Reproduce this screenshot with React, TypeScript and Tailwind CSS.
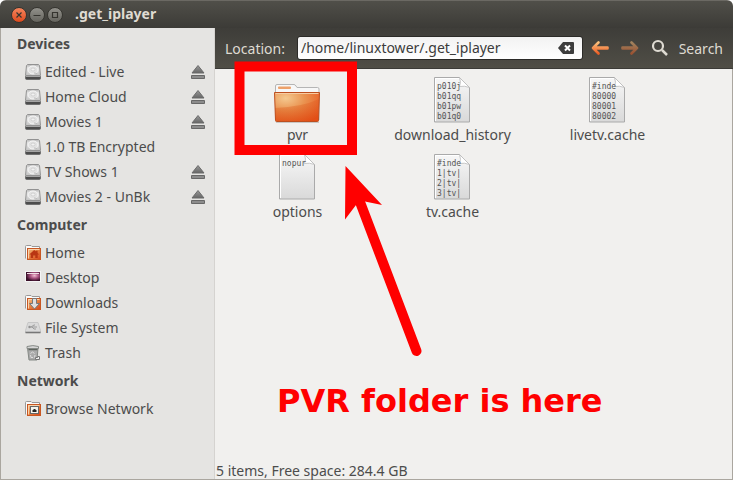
import React, { useState } from "react";

type PlaceKind = "drive" | "home" | "desktop" | "downloads" | "system" | "trash" | "network";

interface Place {
  name: string;
  kind: PlaceKind;
  eject?: boolean;
}

const sections: { title: string; places: Place[] }[] = [
  {
    title: "Devices",
    places: [
      { name: "Edited - Live", kind: "drive", eject: true },
      { name: "Home Cloud", kind: "drive", eject: true },
      { name: "Movies 1", kind: "drive", eject: true },
      { name: "1.0 TB Encrypted", kind: "drive" },
      { name: "TV Shows 1", kind: "drive", eject: true },
      { name: "Movies 2 - UnBk", kind: "drive", eject: true },
    ],
  },
  {
    title: "Computer",
    places: [
      { name: "Home", kind: "home" },
      { name: "Desktop", kind: "desktop" },
      { name: "Downloads", kind: "downloads" },
      { name: "File System", kind: "system" },
      { name: "Trash", kind: "trash" },
    ],
  },
  { title: "Network", places: [{ name: "Browse Network", kind: "network" }] },
];

const files: { name: string; lines?: string[] }[] = [
  { name: "pvr" },
  { name: "download_history", lines: ["p010j", "b01qq", "b01pw", "b01q0"] },
  { name: "livetv.cache", lines: ["#inde", "80000", "80001", "80002"] },
  { name: "options", lines: ["nopur"] },
  { name: "tv.cache", lines: ["#inde", "1|tv|", "2|tv|", "3|tv|"] },
];

function Gradients() {
  return (
    <svg width="0" height="0" className="absolute" aria-hidden="true">
      <defs>
        <linearGradient id="metal" x1="0" y1="0" x2="0" y2="1">
          <stop offset="0" stopColor="#b4b4b4" />
          <stop offset="0.3" stopColor="#e4e4e4" />
          <stop offset="1" stopColor="#c4c4c4" />
        </linearGradient>
        <linearGradient id="orange" x1="0" y1="0" x2="1" y2="1">
          <stop offset="0" stopColor="#f3c48c" />
          <stop offset="0.5" stopColor="#e5803f" />
          <stop offset="1" stopColor="#d8431a" />
        </linearGradient>
        <radialGradient id="folder" cx="0.25" cy="0.2" r="0.95">
          <stop offset="0" stopColor="#f4c88f" />
          <stop offset="0.45" stopColor="#ea9350" />
          <stop offset="1" stopColor="#e8531d" />
        </radialGradient>
        <linearGradient id="shade" x1="0" y1="0" x2="0" y2="1">
          <stop offset="0" stopColor="#d8480c" stopOpacity="0.2" />
          <stop offset="1" stopColor="#d8480c" stopOpacity="0.4" />
        </linearGradient>
        <radialGradient id="wall" cx="0.6" cy="0.4" r="0.6">
          <stop offset="0" stopColor="#f3bfd2" />
          <stop offset="0.5" stopColor="#a85280" />
          <stop offset="1" stopColor="#3a1029" />
        </radialGradient>
        <linearGradient id="paper" x1="0" y1="0" x2="0" y2="1">
          <stop offset="0" stopColor="#f7f7f7" />
          <stop offset="1" stopColor="#d9d9d9" />
        </linearGradient>
        <linearGradient id="eject" x1="0" y1="0" x2="0" y2="1">
          <stop offset="0" stopColor="#999" />
          <stop offset="1" stopColor="#666" />
        </linearGradient>
        <linearGradient id="back" x1="0" y1="0" x2="0" y2="1">
          <stop offset="0" stopColor="#fbc07c" />
          <stop offset="1" stopColor="#ec5e25" />
        </linearGradient>
      </defs>
    </svg>
  );
}

function SmallFolder({ children }: { children: React.ReactNode }) {
  return (
    <>
      <path d="M.5 13.5V1.5Q.5.5 1.5.5H6l1 1h7.5v3" fill="#fafafa" stroke="#999" />
      <rect x="2.5" y="3.5" width="13" height="11" fill="url(#orange)" stroke="#c85722" />
      <path d="M3.5 13.5v-9h11" fill="none" stroke="#f8d2ab" />
      {children}
    </>
  );
}

function PlaceIcon({ kind }: { kind: PlaceKind }) {
  return (
    <svg width="16" height="16" viewBox="0 0 16 16" aria-hidden="true" className="shrink-0">
      {kind === "drive" && (
        <>
          <path d="M2.5.5h11l1 1 1 10H.5l1-10z" fill="url(#metal)" stroke="#929292" />
          <ellipse cx="8" cy="6" rx="5" ry="4" fill="#e2e2e2" stroke="#f6f6f6" />
          <ellipse cx="8" cy="5.5" rx="2" ry="1.5" fill="#f2f2f2" stroke="#c6c6c6" strokeWidth=".7" />
          <path d="m9 9 3 .5" stroke="#bbb" />
          <path d="M.5 12.5h15v1.700q0 1.300-1.300 1.300H1.800q-1.300 0-1.300-1.300z" fill="#4c4c4c" stroke="#707070" />
          <path d="M1 12.500h14" stroke="#a5a5a5" />
        </>
      )}
      {kind === "home" && (
        <SmallFolder>
          <path d="M9.2 5 4.3 9.5h1.4V13h2.4v-2.5h2.2V13h2.4V9.5h1.5l-1.6-1.6V5.7h-1.5v.8z" fill="#b93613" />
        </SmallFolder>
      )}
      {kind === "desktop" && (
        <>
          <rect x=".5" y="1.500" width="15" height="10" fill="#fff" stroke="#f4f4f4" />
          <rect x="1" y="2" width="14" height="9" fill="url(#wall)" />
          <path d="M2 3.500h12" stroke="#f1dce5" />
        </>
      )}
      {kind === "downloads" && (
        <SmallFolder>
          <path d="M7.500 3.500h4v5H14.500L9.500 14 4.500 8.500h3z" fill="#dedede" stroke="#777" />
        </SmallFolder>
      )}
      {kind === "system" && (
        <>
          <path d="M3 2.5h10l2.5 8v2H.5v-2z" fill="#dadada" stroke="#c6c6c6" />
          <path d="M.5 12.5h15" stroke="#777" strokeWidth="1.6" />
          <path d="M4 7h8M6 7l3-2h1M7 7l2 2h2" fill="none" stroke="#9c9c9c" />
          <circle cx="4.5" cy="7" r="1.2" fill="#929292" />
        </>
      )}
      {kind === "trash" && (
        <>
          <path d="M2.5 3h10.500l-1 12H4z" fill="#aaa" stroke="#858985" />
          <path d="M3.500 4.5h9" stroke="#5f645f" strokeWidth="1.500" />
          <path d="M2 1.5Q8-.3 13.500 1.5v2H2z" fill="#d5d5d5" stroke="#868a86" />
          <path d="m5.500 8.500 2-1.500 2 1.500M5.500 10l.5 2.500h2m2-2.500-.5 2.500" fill="none" stroke="#ddd" />
          <path d="M10.500 12.500h2v-1h2v3h-4z" fill="#eee" stroke="#777" />
        </>
      )}
      {kind === "network" && (
        <SmallFolder>
          <rect x="5.5" y="5.500" width="8" height="7" fill="#f4f4ed" stroke="#666" />
          <path d="M7.500 11V9h1V8h2v1h1v2z" fill="#222" />
        </SmallFolder>
      )}
    </svg>
  );
}

function FolderIcon() {
  return (
    <svg width="47" height="47" viewBox="0 0 47 47" aria-hidden="true">
      <path d="M2 46h43v1H2z" fill="#c9c6c3" />
      <path d="M1.500 44V10q0-1.500 1.500-1.500h17q1 0 2 1.500l1 1.500h20.500q1.500 0 1.500 1.500V44z" fill="#f7f7f7" stroke="#b5b5b5" />
      <rect x="4" y="10.500" width="13" height="2.500" rx="1" fill="#eda16a" />
      <path d="M.500 16.500h45l-1 28q0 1-1 1h-41q-1 0-1-1z" fill="url(#folder)" stroke="#bd4f1f" />
      <path d="M1 32Q28 31 45 23l-1 22H2z" fill="url(#shade)" />
      <path d="M1.500 17.500h43" stroke="#f7cba1" />
    </svg>
  );
}

function DocumentIcon({ lines }: { lines: string[] }) {
  return (
    <div className="relative h-[46px] w-[37px]">
      <svg width="36" height="46" viewBox="0 0 36 46" aria-hidden="true">
        <path d="M.5.5h25l10 10v34.500H.5z" fill="url(#paper)" stroke="#aaa" />
        <path d="M1.500 44V1.500H25" fill="none" stroke="#fff" />
        <path d="M25.500.5q2 5 0 9 5-1 10 1z" fill="#fff" stroke="#bbb" strokeWidth=".8" />
      </svg>
      <div className="absolute left-[3px] top-[5px] h-[39px] w-[25px] overflow-hidden font-['DejaVu_Sans_Mono',monospace] text-[8px] leading-[10px] text-[#555]">
        {lines.map((line) => (
          <div key={line}>{line}</div>
        ))}
      </div>
    </div>
  );
}

function Annotation() {
  return (
    <div className="pointer-events-none absolute left-0 top-0">
      <svg width="410" height="300" viewBox="0 0 410 300" aria-hidden="true" className="overflow-visible">
        <rect x="24.500" y="-2.500" width="112.500" height="83.500" fill="none" stroke="#f00" strokeWidth="10" />
        <path d="m145 133 56.500 149" stroke="#f00" strokeWidth="10" strokeLinecap="round" />
        <path d="m130.500 97 36.500 39-17-3.500-9 3.500-11 14.500z" fill="#f00" />
      </svg>
      <p className="ml-[62px] mt-3 whitespace-nowrap font-['DejaVu_Sans',sans-serif] text-[32px] font-bold leading-10 text-[#f00]">
        PVR folder is here
      </p>
    </div>
  );
}

const windowButton =
  "flex size-4 items-center justify-center rounded-full border border-[#363530] text-[#35342f]";

export default function App() {
  const [path, setPath] = useState("/home/linuxtower/.get_iplayer");
  return (
    <div className="flex min-h-screen flex-col overflow-hidden rounded-t-[6px] font-['Noto_Sans',sans-serif] text-[14px] text-[#4c4c4c]">
      <Gradients />
      <header className="flex h-7 shrink-0 items-center border-t border-[#6b6963] bg-gradient-to-b from-[#504f49] to-[#3c3b37] pl-[11px]">
        <div className="flex gap-0.5">
          <button aria-label="Close" className={`${windowButton} bg-gradient-to-b from-[#f5845b] to-[#dc491b]`}>
            <svg width="8" height="8" viewBox="0 0 8 8"><path d="m1.500 1.500 5 5m0-5-5 5" stroke="currentColor" strokeWidth="1.200" /></svg>
          </button>
          <button aria-label="Minimize" className={`${windowButton} bg-gradient-to-b from-[#92918b] to-[#65645e]`}>
            <svg width="8" height="8" viewBox="0 0 8 8"><path d="M.5 4.500h7" stroke="currentColor" strokeWidth="1.200" /></svg>
          </button>
          <button aria-label="Maximize" className={`${windowButton} bg-gradient-to-b from-[#92918b] to-[#65645e]`}>
            <svg width="8" height="8" viewBox="0 0 8 8"><path d="M1.500 1.500h5v5h-5z" fill="none" stroke="currentColor" strokeWidth="1.200" /></svg>
          </button>
        </div>
        <h1 className="ml-3 pb-0.5 font-bold leading-5 text-[#dfdbd2]">.get_iplayer</h1>
      </header>

      <div className="flex flex-1 border-b border-l border-[#aaa69f]">
        <nav className="w-[214px] shrink-0 border-r border-[#d5d3d0] bg-[#e5e4e2]">
          {sections.map((section) => (
            <section key={section.title}>
              <h2 className="flex h-[31px] items-center pl-4 font-bold">{section.title}</h2>
              <ul>
                {section.places.map((place) => (
                  <li key={place.name} className="flex h-[25px] items-center pl-6 pr-2">
                    <a href="#" className="flex flex-1 items-center gap-1">
                      <PlaceIcon kind={place.kind} />
                      {place.name}
                    </a>
                    {place.eject && (
                      <button aria-label={`Eject ${place.name}`}>
                        <svg width="16" height="16" viewBox="0 0 16 16">
                          <path d="m8 1.500 6 7.500H2z" fill="url(#eject)" stroke="#6b6b6b" />
                          <path d="M1.500 11.500h13v3h-13z" fill="#8c8c8c" stroke="#686868" />
                        </svg>
                      </button>
                    )}
                  </li>
                ))}
              </ul>
            </section>
          ))}
        </nav>

        <div className="flex min-w-0 flex-1 flex-col">
          <div className="flex h-[41px] shrink-0 items-center border-b border-[#3c3b37] bg-gradient-to-b from-[#3e3d39] to-[#504e46] pl-2.5 pr-2.5 text-[#dfdbd2]">
            <label htmlFor="location">Location:</label>
            <div className="ml-3 flex h-6 min-w-0 flex-1 items-center rounded-[3px] border border-[#2c2b28] bg-gradient-to-b from-[#f2f2f2] to-white pl-[3px] pr-2">
              <input
                id="location"
                value={path}
                onChange={(e) => setPath(e.target.value)}
                className="min-w-0 flex-1 bg-transparent leading-5 text-[#3c3c3c] outline-none"
              />
              <button aria-label="Clear location" onClick={() => setPath("")}>
                <svg width="16" height="14" viewBox="0 0 16 14">
                  <path d="M0 7 5 1h10q1 0 1 1v10q0 1-1 1H5z" fill="#3d3d3d" />
                  <path d="m7 4.500 5 5m0-5-5 5" stroke="#fff" strokeWidth="2" />
                </svg>
              </button>
            </div>
            <button aria-label="Back" className="ml-2">
              <svg width="18" height="18" viewBox="0 0 18 18">
                <path d="M7.500 3.500 2 9l5.500 5.500M2.500 8.500h14v1h-14z" fill="none" stroke="url(#back)" strokeWidth="2.600" strokeLinecap="round" strokeLinejoin="round" />
              </svg>
            </button>
            <button aria-label="Forward" className="ml-3 opacity-50">
              <svg width="18" height="18" viewBox="0 0 18 18">
                <path d="m10.500 3.500 5.500 5.500-5.500 5.500M1.500 8.500h14v1h-14z" fill="none" stroke="url(#back)" strokeWidth="2.600" strokeLinecap="round" strokeLinejoin="round" />
              </svg>
            </button>
            <button className="ml-3 flex items-center gap-2.5">
              <svg width="18" height="18" viewBox="0 0 18 18" aria-hidden="true">
                <circle cx="7" cy="7" r="5" fill="none" stroke="#dfdbd2" strokeWidth="2.200" />
                <path d="m11 11 5 5" stroke="#dfdbd2" strokeWidth="2.500" />
              </svg>
              Search
            </button>
          </div>

          <main className="relative flex flex-1 flex-col border-r border-[#aaa69f] bg-[#f1f0ee]">
            <ul className="grid grid-cols-[repeat(3,155px)] pl-[5px] pt-1.5">
              {files.map((file) => (
                <li key={file.name} className="flex h-[77px] flex-col items-center">
                  <div className="flex h-[50px] items-end pb-0.5">
                    {file.lines ? <DocumentIcon lines={file.lines} /> : <FolderIcon />}
                  </div>
                  <span className="leading-5">{file.name}</span>
                </li>
              ))}
            </ul>
            <Annotation />
            <p className="mt-auto pl-px leading-4">5 items, Free space: 284.4 GB</p>
          </main>
        </div>
      </div>
    </div>
  );
}
